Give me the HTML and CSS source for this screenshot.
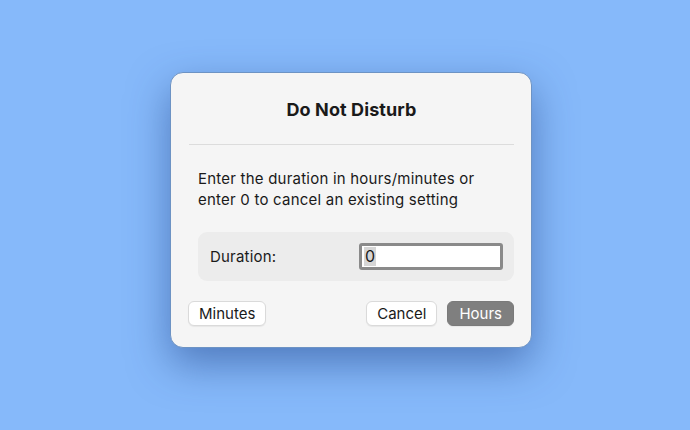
FILE: index.html
```html
<!DOCTYPE html>
<html lang="en">
<head>
  <meta charset="UTF-8" />
  <title>Do Not Disturb</title>
  <link rel="stylesheet" href="styles.css">
</head>
<body>

  <div class="dialog">
    <h1 class="title">Do Not Disturb</h1>
    <hr class="divider">
    <p class="message">Enter the duration in hours/minutes or<br>enter 0 to cancel an existing setting</p>

    <div class="field-group">
      <label class="field-label">Duration:</label>
      <div class="field-input"><span class="selected">0</span></div>
    </div>

    <div class="actions">
      <button class="btn">Minutes</button>
      <div class="actions-right">
        <button class="btn">Cancel</button>
        <button class="btn btn-default">Hours</button>
      </div>
    </div>
  </div>

</body>
</html>
```

FILE: styles.css
```css
html, body {
  height: 100%;
}

body {
  margin: 0;
  padding: 72px 0 0 170px;
  box-sizing: border-box;
  background-color: #86b9fa;
  font-family: Inter, "Noto Sans", sans-serif;
  color: #1a1a1a;
}

.dialog {
  width: 362px;
  height: 276px;
  box-sizing: border-box;
  padding: 26px 17px 0 18px;
  background-color: #f5f5f5;
  border-radius: 13px;
  border: 1px solid #6d93c4;
  box-shadow: 0 16px 40px rgba(25, 60, 130, 0.5);
}

.title {
  margin: 0;
  font-size: 18px;
  line-height: 22px;
  font-weight: 700;
  letter-spacing: 0.1px;
  text-align: center;
}

.divider {
  border: none;
  height: 1px;
  background-color: #dcdcdc;
  margin: 23px 0 0;
}

.message {
  margin: 23px 0 0 9px;
  font-size: 15px;
  line-height: 21px;
  letter-spacing: 0.22px;
}

.field-group {
  display: flex;
  align-items: center;
  justify-content: space-between;
  height: 49px;
  margin: 22px 0 0 9px;
  padding: 0 11px 0 12px;
  background-color: #ececec;
  border-radius: 9px;
}

.field-label {
  font-size: 15px;
  letter-spacing: 0.2px;
}

.field-input {
  width: 144px;
  height: 27px;
  box-sizing: border-box;
  border: 3px solid #8a8a8a;
  border-radius: 3px;
  background-color: #ffffff;
  display: flex;
  align-items: center;
  padding-left: 2px;
  font-size: 16px;
}

.selected {
  background-color: #d6d6d6;
  line-height: 19px;
  padding: 0 1px;
}

.actions {
  display: flex;
  justify-content: space-between;
  margin: 20px 0 0 -1px;
}

.actions-right {
  display: flex;
  gap: 10px;
}

.btn {
  font-family: Inter, "Noto Sans", sans-serif;
  font-size: 15px;
  color: #1a1a1a;
  height: 25px;
  padding: 0 10px;
  background-color: #ffffff;
  border: 1px solid #dadada;
  border-radius: 6px;
  box-shadow: 0 1px 1px rgba(0, 0, 0, 0.06);
}

.btn-default {
  background-color: #7f7f7f;
  border-color: #7a7a7a;
  color: #ffffff;
  padding: 0 11px;
}
```
